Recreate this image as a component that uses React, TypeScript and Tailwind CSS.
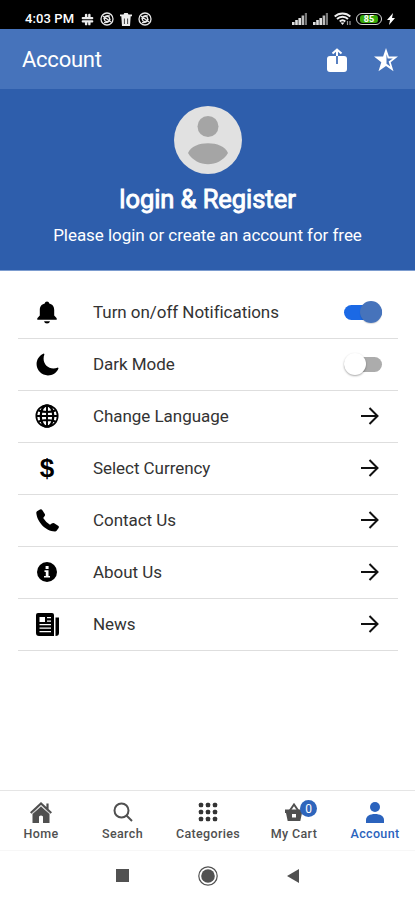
import type { ReactNode } from "react";
import { IoMoon } from "react-icons/io5";

function BlockedIcon() {
  return (
    <svg viewBox="0 0 14 14" className="size-[14px]" fill="none" stroke="#e8e8e8" strokeWidth="1.3">
      <circle cx="7" cy="7" r="6" />
      <circle cx="7" cy="7" r="2.7" />
      <path d="M3 4L11 10M4 10.5C6 11 10 10.5 10 7M4 7C4 4 7 3 10 4" />
    </svg>
  );
}

function Signal() {
  return (
    <svg viewBox="0 0 16 12" className="h-3 w-4">
      <path d="M0 9h2.600v3H0zM3.200 7h2.600v5H3.200zM6.400 5H9v7H6.400z" fill="#dedede" />
      <path d="M9.600 2.500h2.600V12H9.600z" fill="#bcbcbc" />
      <path d="M12.800 0H15v12h-2.200z" fill="#777" />
    </svg>
  );
}

function StatusBar() {
  return (
    <div className="flex h-[29px] shrink-0 items-center bg-black pt-[9px] pl-[25px] text-white">
      <span className="w-[50px] whitespace-nowrap text-[13px] leading-4 font-medium tracking-[0.1px]">4:03 PM</span>
      <div className="ml-[6px] flex items-center gap-[6px]">
        <svg viewBox="0 0 14 14" className="size-[13px]" fill="none" stroke="#ededed" strokeWidth="2.6" strokeLinecap="round">
          <path d="M5.500 2v3.500M2 5.500h3M9 2v3M9 5.500h3M5.500 9v3M2 9h3M9 9v3M9 9h3M5 5.500h4M5 9h4" />
        </svg>
        <BlockedIcon />
        <svg viewBox="0 0 12 13" className="h-[13px] w-3">
          <path d="M0 1.500h3.500L4.300 0h3.400l.8 1.500H12v1.800H0zM1.300 3h9.400L10 13H2z" fill="#ededed" />
          <path d="M4.400 5.500v5.500M7.600 5.500v5.500" stroke="#444" />
        </svg>
        <BlockedIcon />
      </div>
      <div className="mr-[20px] ml-auto flex items-center">
        <Signal />
        <div className="ml-[5px] flex"><Signal /></div>
        <svg viewBox="0 0 18 14" className="ml-[5px] h-[14px] w-[18px]" fill="none" stroke="#eee" strokeWidth="1.900">
          <path d="M.7 4.500C5 .4 12 .4 16.300 4.500M3 7C6 4 11 4 14 7M5.700 9.500c1.700-1.500 4-1.500 5.600 0" />
          <path d="M6.500 10.500h4L8.500 13z" fill="#eee" stroke="none" />
          <path d="M13.500 9v4M16 9v4" stroke="#999" strokeWidth="1.200" />
        </svg>
        <div className="ml-[4px] flex h-3 w-[26px] items-center justify-center rounded-full border-[1.5px] border-[#d8d8d8] p-[1px]">
          <span className="flex h-[8px] w-[18px] items-center justify-center rounded-[3px] bg-[#38aa0a] text-[9px] leading-none font-bold">85</span>
        </div>
        <svg viewBox="0 0 8 12" className="ml-[5px] h-3 w-2"><path d="M6 0L0 7h3L2 12l6-7H5z" fill="#fff" /></svg>
      </div>
    </div>
  );
}

function Header() {
  return (
    <header className="flex h-[60px] shrink-0 items-center justify-between bg-[#4673bb] pr-[17px] pl-[22px]">
      <h1 className="pt-[1px] text-[22px] leading-6 tracking-[-0.25px] text-white">Account</h1>
      <div className="flex items-center gap-[27px] pt-[2px]">
        <svg viewBox="0 0 20 25" className="h-[25px] w-5">
          <rect y="8" width="20" height="16" rx="3" fill="#fff" />
          <path d="M10 8v8" stroke="#4673bb" strokeWidth="1.800" />
          <path d="M10 8V1.800M5.500 5.500L10 1.500l4.500 4" fill="none" stroke="#fff" strokeWidth="2" />
        </svg>
        <svg viewBox="0 0 24 24" className="size-6">
          <path d="M12 0l2.900 8.500H24l-7.300 5.700 2.800 9.100L12 17.900l-7.500 5.400 2.800-9.100L0 8.500h9.100z" fill="#fff" />
          <path d="M12.500 6l1.200 4.400h5.100l-4.200 3.200 1.700 5-3.800-2.800z" fill="#4673bb" />
        </svg>
      </div>
    </header>
  );
}

function Hero() {
  return (
    <section className="flex h-[182px] shrink-0 flex-col items-center border-b border-[#7c9ccf] bg-[#2e5eac] pt-[17px] text-white">
      <svg viewBox="0 0 68 68" className="size-[68px] shrink-0">
        <circle cx="34" cy="34" r="34" fill="#e1e1e1" />
        <circle cx="34" cy="20.500" r="10.500" fill="#a5a5a5" />
        <path d="M14 47C19 34 49 34 54 47C45 62 23 62 14 47Z" fill="#a5a5a5" />
      </svg>
      <h2 className="mt-[9px] text-[25.5px] leading-8 font-normal tracking-[-0.05px] whitespace-nowrap [-webkit-text-stroke:0.9px_white]">login &amp; Register</h2>
      <p className="mt-[10px] text-[17px] leading-5 tracking-[-0.05px] whitespace-nowrap">Please login or create an account for free</p>
    </section>
  );
}

function BellIcon() {
  return (
    <svg viewBox="0 0 20 23" className="h-[23px] w-5">
      <path d="M7.700 2.500Q8 .5 10 .5T12.300 2.500C15.800 3.300 17.200 6 17.200 9V14.500l2.500 2.700v1.500H.3v-1.500l2.500-2.700V9C2.800 6 4.200 3.300 7.700 2.500z" />
      <path d="M7 20.300h6q-.5 2.200-3 2.200T7 20.300z" />
    </svg>
  );
}

function PhoneIcon() {
  return (
    <svg viewBox="0 0 23 23" className="size-[23px]">
      <path d="M1 2.200L4 .4q1.500-.7 2.400.8L8.800 5q.7 1.200-.5 2.400L7.200 9q3 4.700 6.800 6.800l1.700-1.200q1.200-.9 2.500-.3l3.900 2.400q1.300.9.500 2.300l-2 2.800q-.6.700-1.800.6C9.500 22.200 1 12.500.3 3.900Q.2 2.800 1 2.200z" />
    </svg>
  );
}

function GlobeIcon() {
  return (
    <svg viewBox="0 0 24 24" className="size-6" fill="none" stroke="#000" strokeWidth="1.900">
      <circle cx="12" cy="12" r="10.700" strokeWidth="1.700" />
      <ellipse cx="12" cy="12" rx="6.300" ry="10.700" strokeWidth="2.300" />
      <path d="M12 1v22M1 12h22M3.500 6.500Q12 9.500 20.500 6.500M3.500 17.500Q12 14.500 20.500 17.500" />
    </svg>
  );
}

function InfoIcon() {
  return (
    <svg viewBox="0 0 20 20" className="size-5">
      <circle cx="10" cy="10" r="10" />
      <path d="M8.600 4h3v3h-3zM7.500 8.300h4V14h1.500v1.600H7V14h1.800V10H7.500z" fill="#fff" />
    </svg>
  );
}

function NewsIcon() {
  return (
    <svg viewBox="0 0 23 23" className="size-[23px]">
      <path fillRule="evenodd" d="M2 0h14q2 0 2 2v21H3q-3 0-3-3V2Q0 0 2 0zM3.500 4v5H9V4zM11 4v1.300h4V4zM11 7.500v1.300h4V7.500zM3.500 11v1.300H15V11zM3.500 14.500v1.300H15v-1.300zM3.500 18v1.300H15V18z" />
      <path d="M19.500 4.500H23V20q0 3-3.500 3z" />
    </svg>
  );
}

function Arrow() {
  return (
    <svg viewBox="0 0 18 18" className="mr-[3px] size-[18px]" fill="none" stroke="#111" strokeWidth="2">
      <path d="M0 9h16.500M8.500 1l8 8-8 8" />
    </svg>
  );
}

function Toggle({ on }: { on: boolean }) {
  return on ? (
    <div className="flex h-[15px] w-[38px] items-center justify-end rounded-full bg-[#1b69e5]">
      <span className="size-[22px] shrink-0 rounded-full bg-[#4673bb] shadow-[0_1px_1px_rgba(0,0,0,0.15)]" />
    </div>
  ) : (
    <div className="flex h-[15px] w-[38px] items-center rounded-full bg-[#acacac]">
      <span className="size-[22px] shrink-0 rounded-full bg-white shadow-[0_1px_2px_rgba(0,0,0,0.35)]" />
    </div>
  );
}

function Row({ icon, label, action }: { icon: ReactNode; label: string; action?: ReactNode }) {
  return (
    <li className="flex h-[52px] items-center border-b border-[#dedede] pr-[16px] pb-[1px]">
      <span className="ml-[14px] flex w-[30px] justify-center">{icon}</span>
      <span className="ml-[31px] flex-1 pb-[1px] text-[17px] leading-5 tracking-[-0.05px] text-[#333]">{label}</span>
      {action ?? <Arrow />}
    </li>
  );
}

function Tab({ label, width, active, children }: { label: string; width: string; active?: boolean; children: ReactNode }) {
  return (
    <div className={`flex flex-col items-center ${width} ${active ? "text-[#2b63bd]" : "text-[#505050]"}`}>
      <div className="flex h-[24px] items-center justify-center">{children}</div>
      <span className="mt-[2px] text-[12.5px] leading-4 font-medium tracking-[0.35px] whitespace-nowrap">{label}</span>
    </div>
  );
}

function TabBar() {
  return (
    <nav className="flex h-[60px] shrink-0 border-t border-[#e5e5e5] pt-[9px]">
      <Tab label="Home" width="w-[82px]">
        <svg viewBox="0 0 22 21" className="h-[21px] w-[22px]" fill="currentColor">
          <path d="M11 4.500l8.500 7.500V21H13v-6.500q-2-2-4 0V21H2.500v-9z" />
          <path d="M.7 11L11 1.500l10.300 9.500M17.500 7V1.500" fill="none" stroke="currentColor" strokeWidth="2.200" />
          <path d="M2 11.700L11 3.700l9 8" fill="none" stroke="#bbb" strokeWidth=".8" />
        </svg>
      </Tab>
      <Tab label="Search" width="w-[81px]">
        <svg viewBox="0 0 20 20" className="size-5" fill="none" stroke="currentColor" strokeWidth="2">
          <circle cx="8.500" cy="8.500" r="7" /><path d="M13.500 13.500L19 19" />
        </svg>
      </Tab>
      <Tab label="Categories" width="w-[90px]">
        <svg viewBox="0 0 20 20" className="size-5" fill="#333">
          {[3, 10, 17].map((y) => [3, 10, 17].map((x) => <rect key={`${x}-${y}`} x={x - 2.2} y={y - 2.2} width="4.4" height="4.4" rx="1.500" />))}
        </svg>
      </Tab>
      <Tab label="My Cart" width="w-[82px]">
        <div className="relative">
          <svg viewBox="0 0 18 18" className="h-[18px] w-[18px]">
            <path d="M4.500 8L9 1.500 13.500 8" fill="none" stroke="currentColor" strokeWidth="2" />
            <path fillRule="evenodd" d="M0 6.500h18v3.500h-1l-1.700 8H2.700L1 10H0zM7 11v3.500h4V11z" fill="currentColor" />
          </svg>
          <span className="absolute -top-[3px] left-[15px] flex size-[17px] items-center justify-center rounded-full bg-[#2e65bc] text-[12px] font-normal text-white">0</span>
        </div>
      </Tab>
      <Tab label="Account" width="w-[80px]" active>
        <svg viewBox="0 0 20 21" className="h-[21px] w-5" fill="currentColor">
          <circle cx="10" cy="5" r="5" /><path d="M1 21v-3c0-4 4-6 9-6s9 2 9 6v3z" />
        </svg>
      </Tab>
    </nav>
  );
}

export default function App() {
  return (
    <main className="flex h-[900px] w-[415px] flex-col overflow-hidden bg-white font-[Roboto,sans-serif]">
      <StatusBar />
      <Header />
      <Hero />
      <ul className="mr-[17px] ml-[18px] flex-1 pt-[16px]">
        <Row icon={<BellIcon />} label="Turn on/off Notifications" action={<Toggle on />} />
        <Row icon={<IoMoon className="size-[25px]" />} label="Dark Mode" action={<Toggle on={false} />} />
        <Row icon={<GlobeIcon />} label="Change Language" />
        <Row icon={<span className="font-['Liberation_Sans',sans-serif] text-[26px] leading-none font-bold text-black">$</span>} label="Select Currency" />
        <Row icon={<PhoneIcon />} label="Contact Us" />
        <Row icon={<InfoIcon />} label="About Us" />
        <Row icon={<NewsIcon />} label="News" />
      </ul>
      <TabBar />
      <div className="flex h-[50px] shrink-0 items-center justify-center gap-[69px] border-t border-[#f7f7f7] text-[#515151]">
        <span className="size-[13px] bg-current" />
        <svg viewBox="0 0 20 20" className="size-5"><circle cx="10" cy="10" r="9.200" fill="none" stroke="currentColor" strokeWidth="1.200" /><circle cx="10" cy="10" r="6.800" fill="currentColor" /></svg>
        <svg viewBox="0 0 12 14" className="h-[14px] w-3"><path d="M12 0v14L0 7z" fill="currentColor" /></svg>
      </div>
    </main>
  );
}
